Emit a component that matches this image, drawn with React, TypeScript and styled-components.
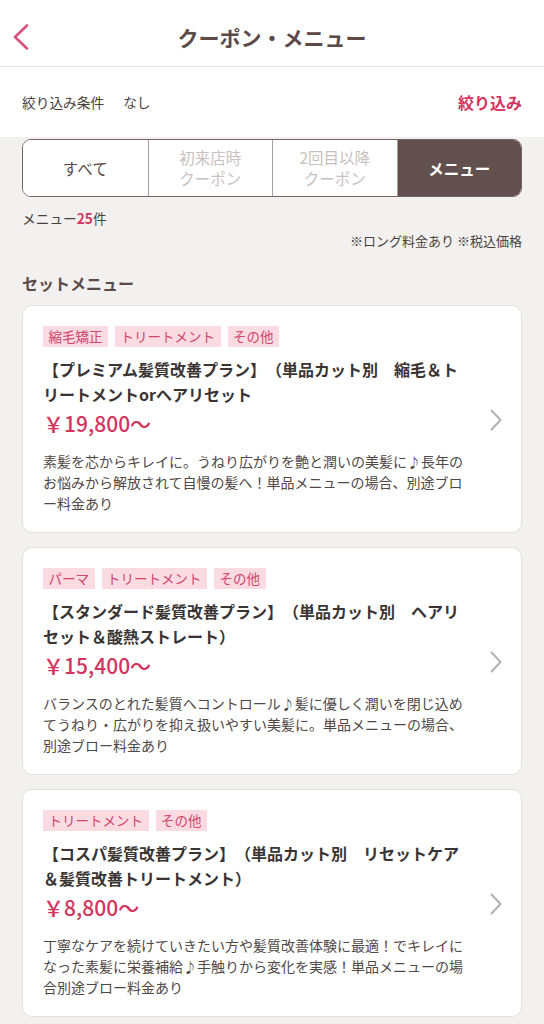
import React from "react";
import styled, { createGlobalStyle } from "styled-components";

const GlobalStyle = createGlobalStyle`
  html, body { margin: 0; padding: 0; background: #f3f1ef; }
  body {
    font-family: "Noto Sans CJK JP", "Noto Sans", sans-serif;
    color: #333;
    -webkit-font-smoothing: antialiased;
    text-spacing-trim: space-all;
  }
  * { box-sizing: border-box; }
`;

const Page = styled.div`
  width: 544px;
  min-height: 1024px;
  background: #f3f1ef;
`;

const Header = styled.header`
  height: 67px;
  padding-top: 8px;
  background: #fff;
  border-bottom: 1px solid #e3e1e0;
  display: grid;
  grid-template-columns: 60px 1fr 60px;
  align-items: center;
`;

const BackButton = styled.button`
  border: 0;
  background: none;
  padding: 0 0 0 12px;
  height: 30px;
  display: flex;
  align-items: center;
  cursor: pointer;
`;

const Title = styled.h1`
  margin: 0;
  text-align: center;
  font-size: 21px;
  font-weight: 700;
  color: #5b4a48;
  line-height: 30px;
`;

const FilterRow = styled.div`
  height: 70px;
  background: #fff;
  display: flex;
  align-items: center;
  justify-content: space-between;
  padding: 0 22px;
`;

const FilterLabel = styled.span`
  font-size: 13.7px;
  color: #4a3f3e;
  display: flex;
  gap: 19px;
`;

const FilterLink = styled.span`
  font-size: 16px;
  font-weight: 700;
  color: #d4355f;
`;

const Main = styled.main`
  padding: 2px 22px 0;
  display: flex;
  flex-direction: column;
`;

const Segmented = styled.div`
  height: 58px;
  display: grid;
  grid-template-columns: repeat(4, 1fr);
  border: 1px solid #76625f;
  border-radius: 9px;
  overflow: hidden;
  background: #fff;
`;

const Segment = styled.div<{ $active?: boolean; $disabled?: boolean }>`
  display: flex;
  align-items: center;
  justify-content: center;
  text-align: center;
  font-size: 15.5px;
  line-height: 21px;
  white-space: pre-line;
  background: ${(p) => (p.$active ? "#62504f" : "#fff")};
  color: ${(p) => (p.$active ? "#fff" : p.$disabled ? "#c9c1c0" : "#5b4a48")};
  font-weight: ${(p) => (p.$active ? 700 : 400)};
  & + & {
    border-left: 1px solid #a99e9d;
  }
`;

const Count = styled.div`
  margin-top: 11px;
  font-size: 13.7px;
  line-height: 20px;
  color: #4a3f3e;
`;

const CountNum = styled.span`
  color: #d4355f;
  font-weight: 700;
`;

const Note = styled.div`
  margin-top: 3px;
  text-align: right;
  font-size: 13px;
  line-height: 20px;
  color: #4a3f3e;
`;

const SectionTitle = styled.h2`
  margin: 20px 0 0;
  font-size: 16px;
  line-height: 24px;
  font-weight: 700;
  color: #5b4a48;
`;

const CardList = styled.div`
  margin-top: 10px;
  display: flex;
  flex-direction: column;
  gap: 14px;
`;

const Card = styled.div`
  background: #fff;
  border: 1px solid #e2dfdd;
  border-radius: 10px;
  padding: 20px 21px 18px 20px;
  display: flex;
  align-items: center;
  gap: 22px;
`;

const CardBody = styled.div`
  width: 425px;
  flex: none;
  display: flex;
  flex-direction: column;
`;

const Tags = styled.div`
  display: flex;
  gap: 7px;
`;

const Tag = styled.span`
  height: 21px;
  padding: 0 5.5px;
  background: #fadbe2;
  color: #d2436d;
  font-size: 13.5px;
  line-height: 21px;
`;

const CardTitle = styled.div`
  margin-top: 10px;
  font-size: 16px;
  line-height: 25px;
  font-weight: 700;
  color: #3a3433;
`;

const Price = styled.div`
  margin-top: 2px;
  font-size: 21px;
  line-height: 28px;
  font-weight: 500;
  color: #d4355f;
`;

const Desc = styled.p`
  margin: 14px 0 0;
  font-size: 14px;
  line-height: 21px;
  color: #4f4847;
  line-break: loose;
`;

const Chevron = styled.svg`
  flex: none;
  width: 12px;
  height: 22px;
`;

type Item = {
  tags: string[];
  title: string;
  price: string;
  desc: string;
};

const items: Item[] = [
  {
    tags: ["縮毛矯正", "トリートメント", "その他"],
    title: "【プレミアム髪質改善プラン】（単品カット別　縮毛＆トリートメントorヘアリセット",
    price: "￥19,800～",
    desc: "素髪を芯からキレイに。うねり広がりを艶と潤いの美髪に♪長年のお悩みから解放されて自慢の髪へ！単品メニューの場合、別途ブロー料金あり",
  },
  {
    tags: ["パーマ", "トリートメント", "その他"],
    title: "【スタンダード髪質改善プラン】（単品カット別　ヘアリセット＆酸熱ストレート）",
    price: "￥15,400～",
    desc: "バランスのとれた髪質へコントロール♪髪に優しく潤いを閉じ込めてうねり・広がりを抑え扱いやすい美髪に。単品メニューの場合、別途ブロー料金あり",
  },
  {
    tags: ["トリートメント", "その他"],
    title: "【コスパ髪質改善プラン】（単品カット別　リセットケア＆髪質改善トリートメント）",
    price: "￥8,800～",
    desc: "丁寧なケアを続けていきたい方や髪質改善体験に最適！でキレイになった素髪に栄養補給♪手触りから変化を実感！単品メニューの場合別途ブロー料金あり",
  },
];

const segments = [
  { label: "すべて" },
  { label: "初来店時\nクーポン", disabled: true },
  { label: "2回目以降\nクーポン", disabled: true },
  { label: "メニュー", active: true },
];

export default function App() {
  return (
    <Page lang="ja">
      <GlobalStyle />
      <Header>
        <BackButton aria-label="戻る">
          <svg width="18" height="26" viewBox="0 0 18 26">
            <path
              d="M15 1.5 L3 13 L15 24.5"
              fill="none"
              stroke="#d9537c"
              strokeWidth="2.6"
              strokeLinecap="round"
              strokeLinejoin="round"
            />
          </svg>
        </BackButton>
        <Title>クーポン・メニュー</Title>
        <span />
      </Header>
      <FilterRow>
        <FilterLabel>
          <span>絞り込み条件</span>
          <span>なし</span>
        </FilterLabel>
        <FilterLink>絞り込み</FilterLink>
      </FilterRow>
      <Main>
        <Segmented>
          {segments.map((s) => (
            <Segment key={s.label} $active={s.active} $disabled={s.disabled}>
              {s.label}
            </Segment>
          ))}
        </Segmented>
        <Count>
          メニュー<CountNum>25</CountNum>件
        </Count>
        <Note>※ロング料金あり ※税込価格</Note>
        <SectionTitle>セットメニュー</SectionTitle>
        <CardList>
          {items.map((it) => (
            <Card key={it.title}>
              <CardBody>
                <Tags>
                  {it.tags.map((t) => (
                    <Tag key={t}>{t}</Tag>
                  ))}
                </Tags>
                <CardTitle>{it.title}</CardTitle>
                <Price>{it.price}</Price>
                <Desc>{it.desc}</Desc>
              </CardBody>
              <Chevron viewBox="0 0 12 22">
                <path
                  d="M1.5 1.5 L10.5 11 L1.5 20.5"
                  fill="none"
                  stroke="#b4b2b1"
                  strokeWidth="2"
                  strokeLinecap="round"
                  strokeLinejoin="round"
                />
              </Chevron>
            </Card>
          ))}
        </CardList>
      </Main>
    </Page>
  );
}
